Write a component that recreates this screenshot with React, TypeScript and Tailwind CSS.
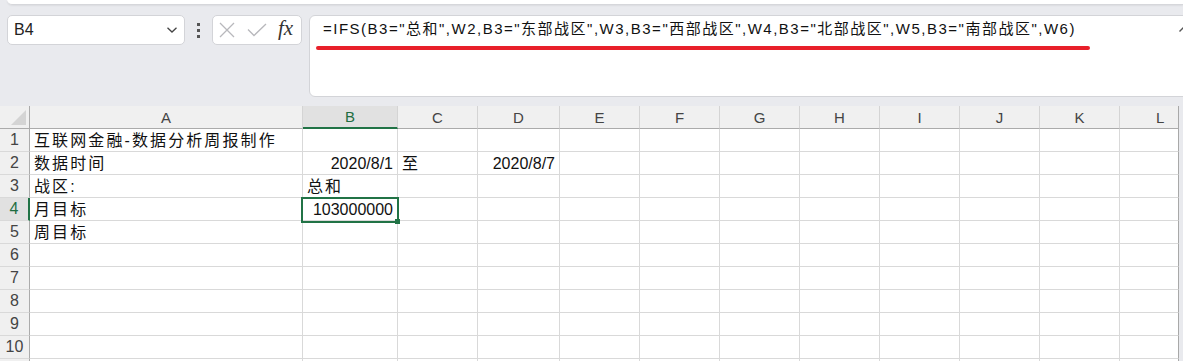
import React from "react";

const FONT = '"Liberation Sans","Noto Sans CJK SC",sans-serif';

type Col = { label: string; w: string };
const cols: Col[] = [
  { label: "A", w: "w-[273px]" },
  { label: "B", w: "w-[95px]" },
  { label: "C", w: "w-[80px]" },
  { label: "D", w: "w-[82px]" },
  { label: "E", w: "w-[80px]" },
  { label: "F", w: "w-[80px]" },
  { label: "G", w: "w-[80px]" },
  { label: "H", w: "w-[80px]" },
  { label: "I", w: "w-[80px]" },
  { label: "J", w: "w-[80px]" },
  { label: "K", w: "w-[80px]" },
  { label: "L", w: "w-[59px]" },
];

type Cell = { text: string; align: "left" | "right"; cjk?: boolean };
const data: Record<string, Cell> = {
  A1: { text: "互联网金融-数据分析周报制作", align: "left", cjk: true },
  A2: { text: "数据时间", align: "left", cjk: true },
  A3: { text: "战区:", align: "left", cjk: true },
  A4: { text: "月目标", align: "left", cjk: true },
  A5: { text: "周目标", align: "left", cjk: true },
  B2: { text: "2020/8/1", align: "right" },
  B3: { text: "总和", align: "left", cjk: true },
  B4: { text: "103000000", align: "right" },
  C2: { text: "至", align: "left", cjk: true },
  D2: { text: "2020/8/7", align: "right" },
};

function Chevron() {
  return (
    <svg width="12" height="8" viewBox="0 0 12 8" fill="none">
      <path d="M1.5 1.8 L6 6 L10.5 1.8" stroke="#444" strokeWidth="1.3" />
    </svg>
  );
}

export default function App() {
  const rows = [1, 2, 3, 4, 5, 6, 7, 8, 9, 10, 11];
  return (
    <div
      className="w-[1183px] h-[361px] overflow-hidden bg-[#e9eaee] flex flex-col"
      style={{ fontFamily: FONT }}
    >
      {/* top strip */}
      <div className="h-[5px] ml-[7px] bg-white border-b border-[#d6d7db] rounded-bl-[6px] shadow-[0_1px_2px_rgba(0,0,0,0.06)] shrink-0" />

      {/* toolbar */}
      <div className="mt-[10px] flex items-start pl-[7px] h-[82px] shrink-0">
        <div className="w-[178px] h-[30px] bg-white border border-[#d3d4d8] rounded-[5px] flex items-center justify-between pl-[6px] pr-[6px]">
          <span className="text-[16px] text-[#222] leading-none">B4</span>
          <Chevron />
        </div>
        <div className="w-[27px] h-[30px] flex flex-col items-center justify-center gap-[3px]">
          <div className="w-[3px] h-[3px] bg-[#555]" />
          <div className="w-[3px] h-[3px] bg-[#555]" />
          <div className="w-[3px] h-[3px] bg-[#555]" />
        </div>
        <div className="w-[90px] h-[30px] bg-white border border-[#d3d4d8] rounded-[5px] flex items-center pl-[6px]">
          <svg width="16" height="16" viewBox="0 0 16 16" fill="none">
            <path d="M1 1 L15 15 M15 1 L1 15" stroke="#b8b8bc" strokeWidth="1.3" />
          </svg>
          <svg className="ml-[12px]" width="20" height="14" viewBox="0 0 20 14" fill="none">
            <path d="M1 6.5 L7 12.5 L19 1" stroke="#b8b8bc" strokeWidth="1.3" />
          </svg>
          <span
            className="ml-[11px] text-[21px] italic text-[#333] leading-none -mt-[3px]"
            style={{ fontFamily: '"Liberation Serif","DejaVu Serif",serif' }}
          >
            fx
          </span>
        </div>
        <div className="ml-[7px] flex-1 h-[82px] -mr-[12px] bg-white border border-[#d3d4d8] rounded-[6px] relative pl-[6px] pt-[3px]">
          <div className="pl-[7px] text-[15px] leading-[20px] tracking-[1.5px] text-[#111] whitespace-nowrap">
            =IFS(B3="总和",W2,B3="东部战区",W3,B3="西部战区",W4,B3="北部战区",W5,B3="南部战区",W6)
          </div>
          <div className="mt-[7px] w-[774px] h-[4px] bg-[#e8202a] rounded-full" />
          <svg className="absolute right-[4px] top-[9px]" width="12" height="8" viewBox="0 0 12 8" fill="none">
            <path d="M1.5 6.5 L6 2 L10.5 6.5" stroke="#555" strokeWidth="1.4" />
          </svg>
        </div>
      </div>

      {/* grid */}
      <div className="mt-[9px] flex flex-col">
        {/* header */}
        <div className="flex h-[23px] shrink-0">
          <div className="w-[30px] h-[23px] bg-[#f0f0f0] border-r border-b border-[#ababab] relative">
            <svg className="absolute left-[11px] top-[4px]" width="15" height="15" viewBox="0 0 15 15">
              <path d="M15 0 L15 15 L0 15 Z" fill="#d4d4d4" />
            </svg>
          </div>
          {cols.map((c) => {
            const sel = c.label === "B";
            return (
              <div
                key={c.label}
                className={`${c.w} h-[23px] flex items-end pb-[2px] text-[15px] leading-[17px] ${
                  sel
                    ? "justify-center bg-[#e1e1e1] text-[#1e6e42] border-b-2 border-b-[#217346] border-r border-r-[#d4d4d4]"
                    : c.label === "L"
                    ? "justify-start pl-[36px] bg-[#f0f0f0] text-[#444] border-b border-b-[#ababab] border-r border-r-[#a8a8a8]"
                    : "justify-center bg-[#f0f0f0] text-[#444] border-b border-b-[#ababab] border-r border-r-[#d4d4d4]"
                }`}
              >
                {c.label}
              </div>
            );
          })}
        </div>
        {rows.map((r) => {
          const selRow = r === 4;
          return (
            <div key={r} className="flex h-[23px] shrink-0">
              <div
                className={`w-[30px] h-[23px] flex items-end justify-center pb-[2px] text-[16px] leading-[18px] border-b border-b-[#d9d9d9] ${
                  selRow
                    ? "bg-[#e1e1e1] text-[#1e6e42] border-r-2 border-r-[#217346]"
                    : "bg-[#f0f0f0] text-[#444] border-r border-r-[#ababab]"
                }`}
              >
                {r <= 10 ? r : ""}
              </div>
              {cols.map((c) => {
                const key = `${c.label}${r}`;
                const cell = data[key];
                const isSel = key === "B4";
                return (
                  <div
                    key={key}
                    className={`${c.w} h-[23px] bg-white border-b border-b-[#d9d9d9] border-r ${
                      c.label === "L" ? "border-r-[#a8a8a8]" : "border-r-[#d9d9d9]"
                    } flex items-end pb-[1px] relative ${
                      cell?.align === "right" ? "justify-end pr-[4px]" : "pl-[4px]"
                    }`}
                  >
                    {cell && (
                      <span
                        className={`text-[16px] leading-[18px] text-[#111] whitespace-nowrap ${
                          cell.cjk ? "tracking-[2.1px]" : ""
                        }`}
                      >
                        {cell.text}
                      </span>
                    )}
                    {isSel && (
                      <>
                        <div className="absolute z-10 left-[-2px] top-[-1px] w-[98px] h-[26px] border-2 border-[#217346] pointer-events-none" />
                        <div className="absolute z-20 left-[92px] top-[21px] w-[5px] h-[5px] bg-[#217346]" />
                      </>
                    )}
                  </div>
                );
              })}
            </div>
          );
        })}
      </div>
    </div>
  );
}
